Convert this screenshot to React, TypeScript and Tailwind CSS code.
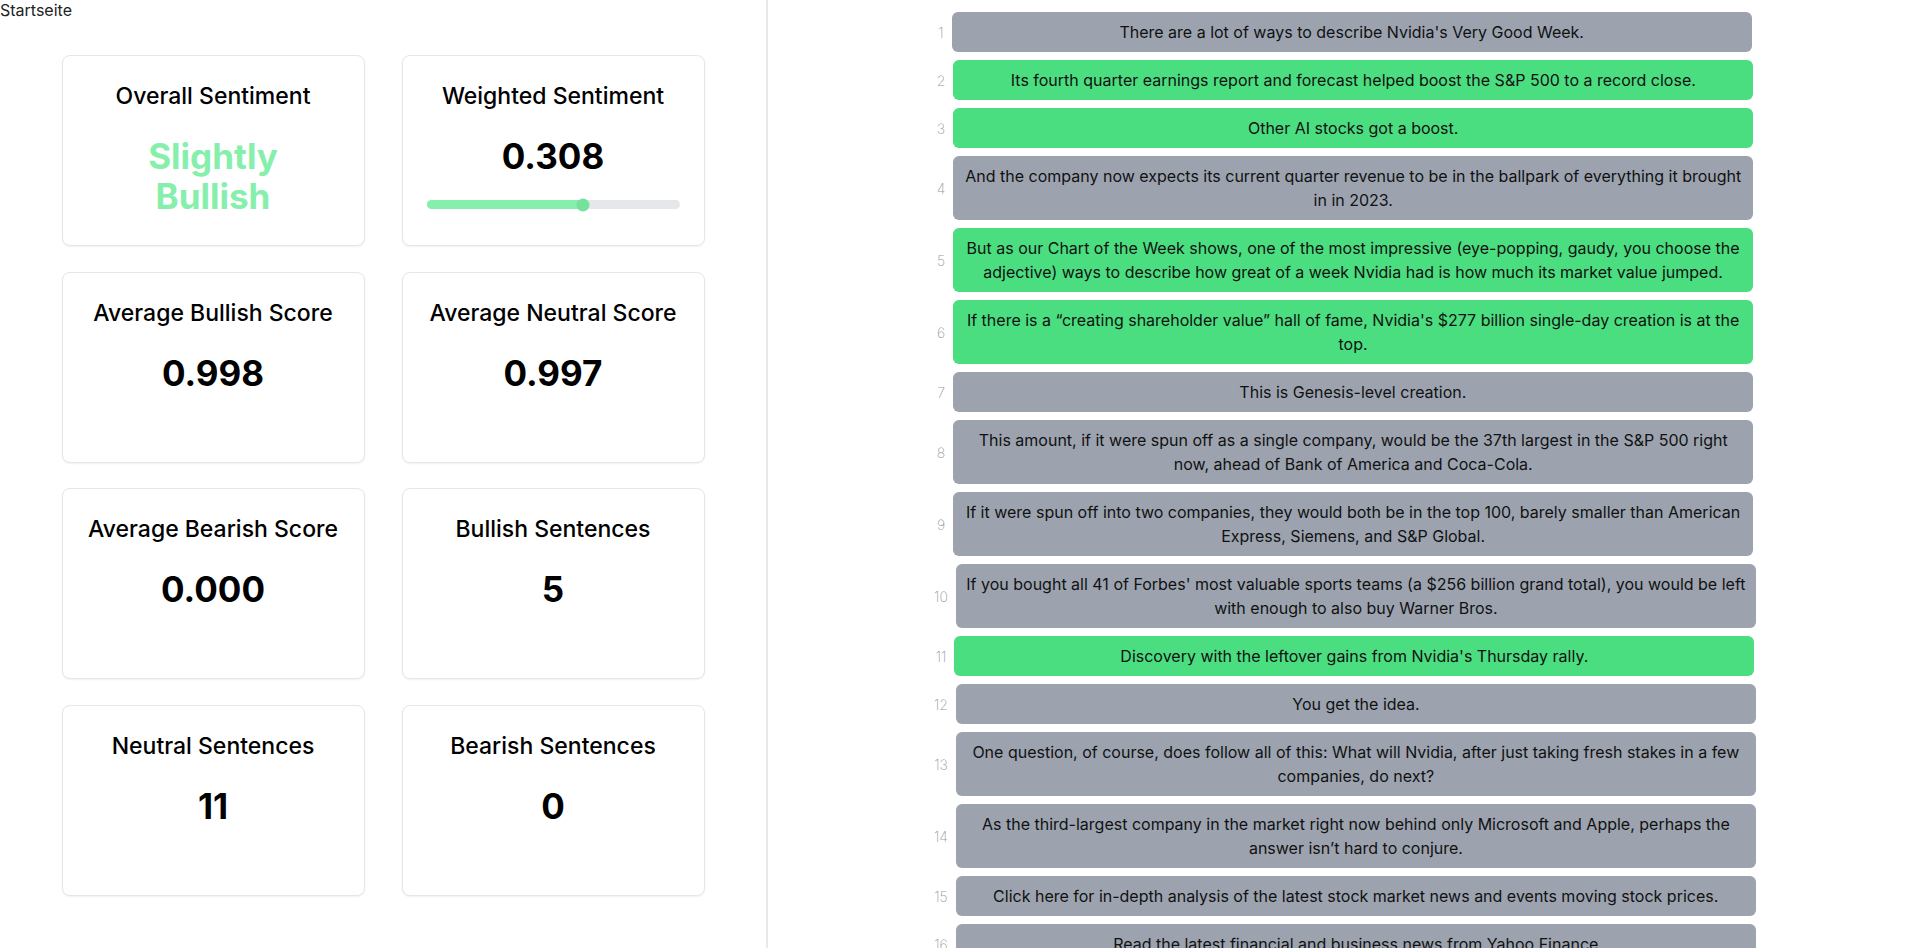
import React from "react";

type Sentence = { text: string; bullish: boolean };

const sentences: Sentence[] = [
  { text: "There are a lot of ways to describe Nvidia's Very Good Week.", bullish: false },
  { text: "Its fourth quarter earnings report and forecast helped boost the S&P 500 to a record close.", bullish: true },
  { text: "Other AI stocks got a boost.", bullish: true },
  { text: "And the company now expects its current quarter revenue to be in the ballpark of everything it brought in in 2023.", bullish: false },
  { text: "But as our Chart of the Week shows, one of the most impressive (eye-popping, gaudy, you choose the adjective) ways to describe how great of a week Nvidia had is how much its market value jumped.", bullish: true },
  { text: "If there is a \u201ccreating shareholder value\u201d hall of fame, Nvidia's $277 billion single-day creation is at the top.", bullish: true },
  { text: "This is Genesis-level creation.", bullish: false },
  { text: "This amount, if it were spun off as a single company, would be the 37th largest in the S&P 500 right now, ahead of Bank of America and Coca-Cola.", bullish: false },
  { text: "If it were spun off into two companies, they would both be in the top 100, barely smaller than American Express, Siemens, and S&P Global.", bullish: false },
  { text: "If you bought all 41 of Forbes' most valuable sports teams (a $256 billion grand total), you would be left with enough to also buy Warner Bros.", bullish: false },
  { text: "Discovery with the leftover gains from Nvidia's Thursday rally.", bullish: true },
  { text: "You get the idea.", bullish: false },
  { text: "One question, of course, does follow all of this: What will Nvidia, after just taking fresh stakes in a few companies, do next?", bullish: false },
  { text: "As the third-largest company in the market right now behind only Microsoft and Apple, perhaps the answer isn\u2019t hard to conjure.", bullish: false },
  { text: "Click here for in-depth analysis of the latest stock market news and events moving stock prices.", bullish: false },
  { text: "Read the latest financial and business news from Yahoo Finance", bullish: false },
];

function Card({ title, children }: { title: string; children: React.ReactNode }) {
  return (
    <div className="h-[191px] rounded-lg border border-[#e6e6e6] bg-white px-6 pt-6 shadow-[0_1px_2px_rgba(0,0,0,0.06)] flex flex-col items-center">
      <div className="text-[23px] leading-8 font-medium text-black text-center">{title}</div>
      <div className="mt-6 w-full flex flex-col items-center">{children}</div>
    </div>
  );
}

function Value({ children }: { children: React.ReactNode }) {
  return <div className="text-[35px] leading-10 font-bold text-black text-center">{children}</div>;
}

export default function App() {
  const sliderPct = 61.7;
  return (
    <div className="flex h-[948px] w-full overflow-hidden bg-white" style={{ fontFamily: "Inter, 'Liberation Sans', sans-serif" }}>
      <div className="w-[768px] shrink-0 border-r-2 border-[#e8e8e8]">
        <div className="text-[16px] leading-[20px] text-[#222]">Startseite</div>
        <div className="mt-[35px] grid grid-cols-[303px_303px] justify-center gap-x-[37px] gap-y-[25.5px]">
          <Card title="Overall Sentiment">
            <div className="text-[35px] leading-10 font-bold text-[#86efac] text-center w-[200px]">Slightly Bullish</div>
          </Card>
          <Card title="Weighted Sentiment">
            <Value>0.308</Value>
            <div className="relative mt-6 h-[9px] w-full rounded-full bg-[#e5e7eb]">
              <div className="h-full rounded-full bg-[#86efac]" style={{ width: `${sliderPct}%` }} />
              <div
                className="absolute top-1/2 h-[13px] w-[13px] -translate-x-1/2 -translate-y-1/2 rounded-full bg-[#74e29c]"
                style={{ left: `${sliderPct}%` }}
              />
            </div>
          </Card>
          <Card title="Average Bullish Score">
            <Value>0.998</Value>
          </Card>
          <Card title="Average Neutral Score">
            <Value>0.997</Value>
          </Card>
          <Card title="Average Bearish Score">
            <Value>0.000</Value>
          </Card>
          <Card title="Bullish Sentences">
            <Value>5</Value>
          </Card>
          <Card title="Neutral Sentences">
            <Value>11</Value>
          </Card>
          <Card title="Bearish Sentences">
            <Value>0</Value>
          </Card>
        </div>
      </div>
      <div className="flex-1 pl-1 pt-3 flex flex-col items-center gap-2">
        {sentences.map((s, i) => (
          <div key={i} className="flex items-center gap-2">
            <span className="text-[14px] font-extralight text-[#999]">{i + 1}</span>
            <div
              className={`w-[800px] rounded-md px-2 py-2 text-center text-[16px] leading-6 text-[#111] ${
                s.bullish ? "bg-[#4ade80]" : "bg-[#9ca3af]"
              }`}
            >
              {s.text}
            </div>
          </div>
        ))}
      </div>
    </div>
  );
}
